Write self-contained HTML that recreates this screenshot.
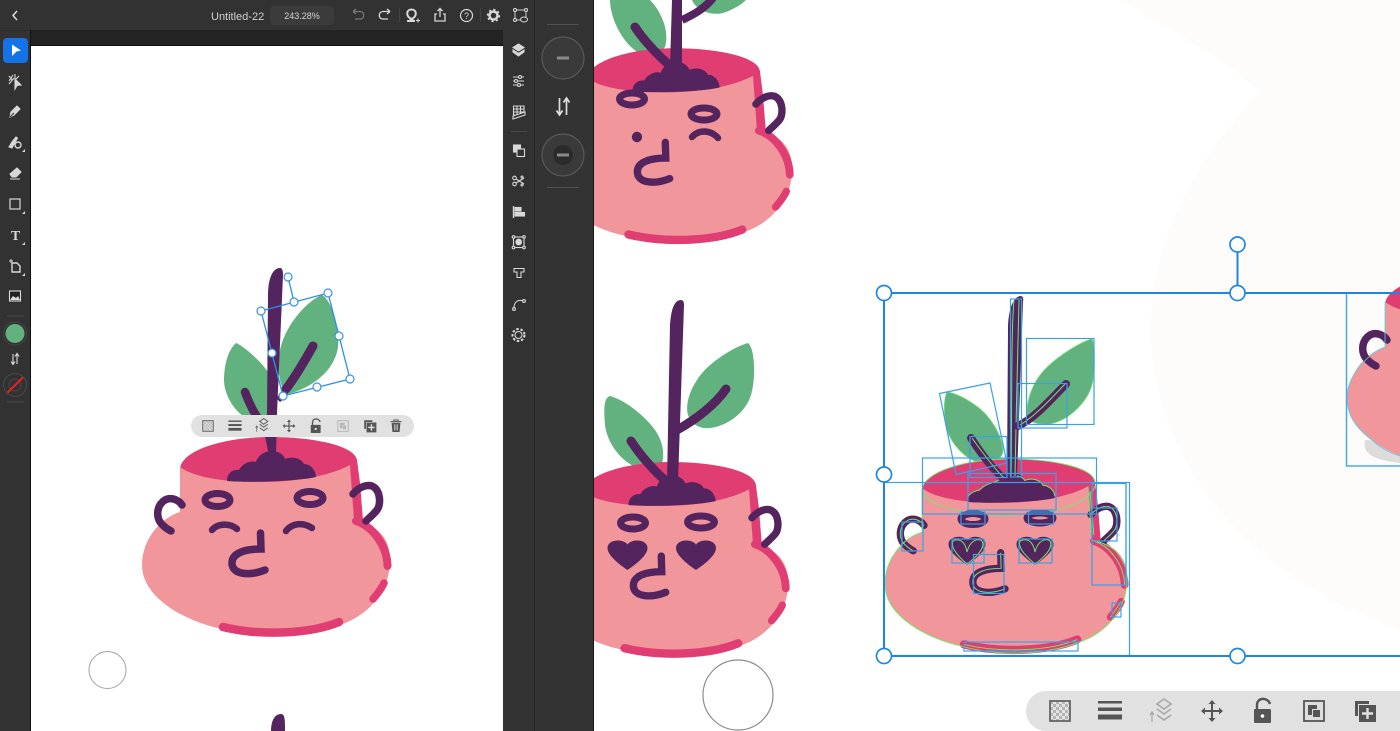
<!DOCTYPE html>
<html><head><meta charset="utf-8"><style>
html,body{margin:0;padding:0;background:#fff;width:1400px;height:731px;overflow:hidden}
svg{position:absolute;left:0;top:0;display:block}
text{font-family:"Liberation Sans",sans-serif}
</style></head><body>
<svg width="1400" height="731" viewBox="0 0 1400 731" xmlns="http://www.w3.org/2000/svg">
<defs>
<pattern id="chk" width="6" height="6" patternUnits="userSpaceOnUse" x="-10" y="-10"><rect width="6" height="6" fill="#e4e4e4"/><rect width="3" height="3" fill="#b4b4b4"/><rect x="3" y="3" width="3" height="3" fill="#b4b4b4"/></pattern>

<g id="pot">
  <path d="M180 470C180 450 225 437 270 437C315 437 355 446 357 460L360 483L363 520L350 524L300 500H200Z" fill="#e03e72"/>
  <path d="M180 467L180 512C160 518 142 540 142 565C142 600 190 622 218 628C250 638 300 640 340 625C370 615 390 590 390 560C390 535 375 525 354 520L350 465C330 476 295 482 262 482C225 482 195 478 180 467Z" fill="#f1979c"/>
  <path d="M356 521C372 526 387 545 387.500 566" fill="none" stroke="#e03e72" stroke-width="8" stroke-linecap="round"/>
  <path d="M223 627C260 636 310 634 339 622" fill="none" stroke="#e03e72" stroke-width="8.500" stroke-linecap="round"/>
  <path d="M384 583C381 590 377 594 373 599" fill="none" stroke="#e03e72" stroke-width="7.500" stroke-linecap="round"/>
  <path d="M353 494C358 488 366 484 372 486C381 490 381 505 377 510C373 515 369 518 366 521" fill="none" stroke="#54245f" stroke-width="7.500" stroke-linecap="round"/>
  <path d="M182 505C178 499 170 497 165 500C157 505 156 515 160 522C163 526 167 529 171 531" fill="none" stroke="#54245f" stroke-width="7.500" stroke-linecap="round"/>
  <path d="M227 481C227 474 232 469 239 470C242 464 250 460 256 462C258 455 265 451 272 451C279 451 284 455 285 459C292 456 301 458 304 464C311 464 316 471 316 477C300 481 250 483 227 481Z" fill="#54245f"/>
  <path d="M260.500 533L261 549C245 549 232 553 232 563C232 575 250 576 265 570" fill="none" stroke="#54245f" stroke-width="7.500" stroke-linecap="round"/>
</g>

<g id="potlines">
  <path d="M180 467L180 512C160 518 142 540 142 565C142 600 190 622 218 628C250 638 300 640 340 625C370 615 390 590 390 560C390 535 375 525 354 520L350 465"/>
  <path d="M180 468C182 450 225 437 270 437C315 437 355 446 357 460"/>
  <path d="M180 470C190 490 240 495 270 494C310 494 350 485 357 465"/>
  <path d="M356 521C372 526 387 545 387.500 566M352 470L356 515"/>
  <path d="M223 627C260 636 310 634 339 622"/>
  <path d="M353 494C358 488 366 484 372 486C381 490 381 505 377 510C373 515 369 518 366 521"/>
  <path d="M182 505C178 499 170 497 165 500C157 505 156 515 160 522C163 526 167 529 171 531"/>
  <path d="M260.500 533L261 549C245 549 232 553 232 563C232 575 250 576 265 570"/>
  <path d="M227 475C232 469 239 470 242 466C250 460 256 462 262 456C272 451 284 455 285 459C292 456 301 458 304 464C311 464 316 471 316 475"/>
  <path d="M384 583L373 599"/>
</g>

<path id="heart" d="M0 27C-6 23 -20 13 -20 5C-20 -3 -8 -4 -3 -1C-1 0 0 1 0 2C0 1 1 0 3 -1C8 -4 20 -3 20 5C20 13 6 23 0 27Z"/>

<g id="i-chk"><rect x="-10" y="-10" width="20" height="20" fill="url(#chk)" stroke="#666" stroke-width="1.800"/></g>
<g id="i-lines" fill="#555"><rect x="-12" y="-10" width="24" height="2.500"/><rect x="-12" y="-3.500" width="24" height="3.500"/><rect x="-12" y="3.500" width="24" height="5"/></g>
<g id="i-layer" fill="none" stroke="#555" stroke-width="1.600"><path d="M3 -13L10 -8L3 -3L-4 -8Z"/><path d="M-4 -3L3 2L10 -3"/><path d="M-4 3L3 8L10 3"/><path d="M-9 10V1M-11 3L-9 0L-7 3" stroke-width="1.200"/></g>
<g id="i-move" fill="#555"><rect x="-10" y="-1" width="20" height="2"/><rect x="-1" y="-10" width="2" height="20"/><path d="M-11 0L-7 -3.500V3.500ZM11 0L7 -3.500V3.500ZM0 -11L-3.500 -7H3.500ZM0 11L-3.500 7H3.500Z"/></g>
<g id="i-lock"><path d="M-6 -2V-6C-6 -14 5 -14 7 -7" fill="none" stroke="#555" stroke-width="2.400"/><rect x="-9" y="-2" width="17" height="14" rx="1" fill="#555"/><circle cx="-0.500" cy="5" r="1.800" fill="#fff"/></g>
<g id="i-mask"><rect x="-10" y="-10" width="20" height="20" fill="#dedede" stroke="#555" stroke-width="1.800"/><path d="M-6 -6H3V-2H-2V4H-6Z" fill="#555"/><rect x="-1" y="-1" width="7" height="7" fill="#555"/></g>
<g id="i-dup"><path d="M-10 -10H4V-7H-7V5H-10Z" fill="#555"/><rect x="-6" y="-6" width="17" height="17" fill="#555"/><path d="M2.500 -3V8M-3 2.500H8" stroke="#e1e1e1" stroke-width="2.400"/></g>
<g id="i-trash"><path d="M-10 -8H10M-4 -8V-11H4V-8" fill="none" stroke="#555" stroke-width="1.800"/><path d="M-8 -6H8L6.500 11H-6.500Z" fill="#555"/><path d="M-3 -3V8M0 -3V8M3 -3V8" stroke="#e1e1e1" stroke-width="1.200"/></g>
</defs>

<rect width="1400" height="731" fill="#fff"/>

<!-- off-white blob -->
<path d="M1120 0C1160 25 1220 55 1260 92C1185 170 1150 250 1151 335C1155 450 1230 570 1400 630V0Z" fill="#fdfcfa"/>

<!-- Pot C (top) -->
<path d="M610 0C610 20 625 48 643 55C650 57 662 52 665 47C670 30 660 10 650 0Z" fill="#62b27f"/>
<path d="M692 0C696 10 710 16 723 13C735 9 742 4 746 0Z" fill="#62b27f"/>
<g transform="translate(410 -380) scale(.98)"><use href="#pot"/></g>
<path d="M672 0L670 66H682L682 0Z" fill="#54245f"/>
<path d="M682 20C695 14 705 8 713 -2" fill="none" stroke="#54245f" stroke-width="8"/>
<path d="M635 27C645 42 658 55 668 64" fill="none" stroke="#54245f" stroke-width="9" stroke-linecap="round"/>
<ellipse cx="632" cy="99" rx="12.500" ry="6" fill="none" stroke="#54245f" stroke-width="7"/>
<ellipse cx="704" cy="114" rx="13" ry="6" fill="none" stroke="#54245f" stroke-width="7"/>
<path d="M692 137C698 130 710 129 718 138" fill="none" stroke="#54245f" stroke-width="6.500" stroke-linecap="round"/>
<circle cx="637" cy="137" r="5.200" fill="#54245f"/>

<!-- Pot B -->
<path d="M748 343C736 346 708 362 697 380C690 390 685 405 688 415C692 425 700 429 710 428C728 426 746 412 751 395C756 378 755 348 748 343Z" fill="#62b27f"/>
<path d="M610 396C603 398 604 412 605 425C607 442 620 462 640 469C650 472 660 470 662 463C665 452 662 440 655 430C645 416 625 400 610 396Z" fill="#62b27f"/>
<g transform="translate(406 33.700) scale(.98)"><use href="#pot"/></g>
<path d="M681 300C674 300 671 310 670 325L667 482H678L684 305C684 302 683 300 681 300Z" fill="#54245f"/>
<path d="M677 430C695 420 715 405 726 389" fill="none" stroke="#54245f" stroke-width="9" stroke-linecap="round"/>
<path d="M631 441C640 455 655 472 666 481" fill="none" stroke="#54245f" stroke-width="9" stroke-linecap="round"/>
<ellipse cx="633" cy="523" rx="12.500" ry="6" fill="none" stroke="#54245f" stroke-width="7"/>
<ellipse cx="701" cy="522" rx="13.500" ry="6" fill="none" stroke="#54245f" stroke-width="7"/>
<use href="#heart" fill="#54245f" transform="translate(627.500 543)"/>
<use href="#heart" fill="#54245f" transform="translate(696 543)"/>

<!-- Pot A -->
<path d="M322 295C332 300 340 330 338 347C334 375 305 390 288 394C280 390 276 370 280 350C285 325 308 300 322 295Z" fill="#62b27f"/>
<path d="M236 343C228 350 224 365 224 380C224 395 235 412 245 417L270 417L268 372C260 360 242 345 236 343Z" fill="#62b27f"/>
<use href="#pot"/>
<path d="M280 268C272 268 268 280 268 295L267 413L265 436L269 456H276L277 413L283 275C283 270 282 268 280 268Z" fill="#54245f"/>
<path d="M286 389C293 380 304 362 313 346" fill="none" stroke="#54245f" stroke-width="9" stroke-linecap="round"/>
<path d="M278 400L286 392" stroke="#54245f" stroke-width="6"/>
<path d="M245 392C248 400 252 410 258 418" fill="none" stroke="#54245f" stroke-width="8.500" stroke-linecap="round"/>
<ellipse cx="217.500" cy="500" rx="12.500" ry="6.500" fill="none" stroke="#54245f" stroke-width="7"/>
<ellipse cx="310" cy="498" rx="13" ry="6.500" fill="none" stroke="#54245f" stroke-width="7"/>
<path d="M212 530C218 523 230 523 237 529" fill="none" stroke="#54245f" stroke-width="6.500" stroke-linecap="round"/>
<path d="M286 531C292 523 303 522 312 528" fill="none" stroke="#54245f" stroke-width="6.500" stroke-linecap="round"/>
<!-- bottom stem -->
<path d="M271 731C271 722 274 714 281 714C285 714 285 720 285 731Z" fill="#54245f"/>
<!-- selection on A -->
<g stroke="#2b8fe8" fill="none" stroke-width="1.300">
<path d="M261 311L328 293L350 379L283 396Z"/><path d="M294 302L288 277"/>
</g>
<g fill="#fff" stroke="#3b92e8" stroke-width="1.200">
<circle cx="288" cy="277" r="4"/><circle cx="261" cy="311" r="4"/><circle cx="294" cy="302" r="4"/><circle cx="328" cy="293" r="4"/><circle cx="339" cy="336" r="4"/><circle cx="350" cy="379" r="4"/><circle cx="317" cy="387" r="4"/><circle cx="283" cy="396" r="4"/><circle cx="272" cy="353" r="4"/>
</g>
<!-- toolbar small -->
<rect x="191" y="415" width="223" height="22" rx="11" fill="#e1e1e1"/>
<g transform="translate(208 426) scale(.53)"><use href="#i-chk"/></g>
<g transform="translate(235 426) scale(.55)"><use href="#i-lines"/></g>
<g transform="translate(262 426) scale(.58)"><use href="#i-layer"/></g>
<g transform="translate(289 426) scale(.58)"><use href="#i-move"/></g>
<g transform="translate(316 426) scale(.58)"><use href="#i-lock"/></g>
<g transform="translate(343 426) scale(.53)" opacity=".3"><use href="#i-mask"/></g>
<g transform="translate(370 426) scale(.58)"><use href="#i-dup"/></g>
<g transform="translate(396 426) scale(.55)"><use href="#i-trash"/></g>
<circle cx="107.500" cy="670" r="18.500" fill="#fff" stroke="#a3a3a3" stroke-width="1"/>

<!-- Pot D -->
<path d="M1092 339C1080 342 1050 360 1038 378C1030 390 1026 405 1027 417C1030 423 1040 425 1050 424C1070 420 1090 400 1093 380C1095 365 1095 345 1092 339Z" fill="#62b27f" stroke="#74e070" stroke-width=".8"/>
<path d="M947 392C943 400 944 420 947 430C952 445 965 458 977 462C990 465 1003 460 1003 450C1002 435 990 415 975 405C965 398 955 393 947 392Z" fill="#62b27f" stroke="#74e070" stroke-width=".8"/>
<g transform="translate(746.400 32.500) scale(.976)"><use href="#pot"/><use href="#potlines" fill="none" stroke="#74e868" stroke-width="1"/></g>
<path d="M1020 296C1012 298 1008 312 1008 330L1007 478H1017L1023 302C1024 297 1022 296 1020 296Z" fill="#54245f"/>
<path d="M1014 300C1011 330 1012 420 1011 476" fill="none" stroke="#74e868" stroke-width="1"/>
<path d="M1019 300C1018 340 1016 420 1015 476" fill="none" stroke="#74e868" stroke-width="1"/>
<path d="M1018 426C1035 418 1050 400 1066 384" fill="none" stroke="#54245f" stroke-width="8" stroke-linecap="round"/>
<path d="M1020 425C1035 416 1050 400 1065 384" fill="none" stroke="#74e868" stroke-width="1"/>
<path d="M971 438C980 452 992 468 1003 478" fill="none" stroke="#54245f" stroke-width="8" stroke-linecap="round"/>
<path d="M972 438C982 452 994 468 1004 478" fill="none" stroke="#74e868" stroke-width="1"/>
<ellipse cx="973" cy="519" rx="12" ry="5.500" fill="none" stroke="#54245f" stroke-width="7"/>
<ellipse cx="1040" cy="518" rx="13" ry="5" fill="none" stroke="#54245f" stroke-width="7"/>
<use href="#heart" fill="#54245f" stroke="#54245f" stroke-width="2" transform="translate(967 540) scale(.88)"/>
<use href="#heart" fill="#54245f" stroke="#54245f" stroke-width="2" transform="translate(1035 540) scale(.88)"/>
<path d="M953 541C958 538 965 540 967 552C970 540 978 538 982 541C986 548 975 558 967 564C960 558 950 548 953 541ZM1020 541C1026 538 1033 540 1035 552C1038 540 1046 538 1050 541C1054 548 1043 558 1035 564C1028 558 1017 548 1020 541Z" fill="none" stroke="#74e868" stroke-width="1"/>

<!-- Pot E -->
<path d="M1365 440C1362 455 1375 460 1400 463V442Z" fill="#dedcda"/>
<g transform="translate(1205 -165)"><use href="#pot"/></g>
<path d="M1385 302V347C1370 352 1347 375 1347 397C1347 420 1360 430 1372 440C1380 448 1390 453 1400 456" fill="none" stroke="#4fd8e8" stroke-width=".8"/>
<rect x="1346.500" y="293" width="80" height="173" fill="none" stroke="#4ea6ea" stroke-width="1.500"/>

<!-- bounding boxes D -->
<g fill="none" stroke="#3ba0ea" stroke-width="1.200">
<rect x="1010.500" y="299" width="11" height="178"/>
<rect x="1026.500" y="338.500" width="67.500" height="86"/>
<rect x="1018" y="383.500" width="49" height="44.500"/>
<path d="M939.500 393.500L990 383L1007 463L956 474.500Z"/>
<rect x="970" y="436.500" width="37" height="41"/>
<rect x="922.500" y="458" width="174" height="56"/>
<rect x="968" y="473.500" width="88" height="36.500"/>
<rect x="884" y="482.500" width="245.500" height="173"/>
<path d="M1126 483V585"/>
<rect x="1092" y="483.500" width="34" height="101.500"/>
<rect x="1092" y="508" width="25" height="33"/>
<rect x="902" y="522" width="21" height="29"/>
<rect x="961" y="512" width="24" height="12"/>
<rect x="1028.500" y="512" width="25" height="12"/>
<rect x="952" y="539" width="32" height="24"/>
<rect x="1019" y="539" width="33" height="24"/>
<rect x="973.500" y="554.500" width="30.500" height="39"/>
<rect x="1112" y="603" width="9" height="14"/>
<rect x="964" y="642" width="114" height="9"/>
</g>
<g fill="none" stroke="#1c86e2" stroke-width="2">
<path d="M884 293H1400M884 293V656H1400"/>
<path d="M1237.500 244V293"/>
</g>
<g fill="#fff" stroke="#1c86e2" stroke-width="1.700">
<circle cx="884" cy="293" r="7.500"/><circle cx="1237.500" cy="293" r="7.500"/><circle cx="1237.500" cy="244.500" r="7.500"/><circle cx="884" cy="474.500" r="7.500"/><circle cx="884" cy="656" r="7.500"/><circle cx="1237.500" cy="656" r="7.500"/>
</g>
<circle cx="738" cy="695" r="35" fill="#fff" stroke="#8c8c8c" stroke-width="1.200"/>

<!-- big toolbar -->
<path d="M1400 691H1046A20 20 0 0 0 1046 731H1400Z" fill="#e1e1e1"/>
<g transform="translate(1060 711)"><use href="#i-chk"/></g>
<g transform="translate(1110 711)"><use href="#i-lines"/></g>
<g transform="translate(1161 712)" opacity=".4"><use href="#i-layer"/></g>
<g transform="translate(1212 711)"><use href="#i-move"/></g>
<g transform="translate(1263 711)"><use href="#i-lock"/></g>
<g transform="translate(1314 711)"><use href="#i-mask"/></g>
<g transform="translate(1365 711)"><use href="#i-dup"/></g>

<!-- panels -->
<rect x="0" y="0" width="31" height="731" fill="#323232"/>
<rect x="30" y="30" width="1" height="701" fill="#111"/>
<rect x="503" y="0" width="31" height="731" fill="#323232"/>
<rect x="534" y="0" width="59" height="731" fill="#333"/>
<rect x="534" y="0" width="1" height="731" fill="#272727"/>
<rect x="593" y="0" width="1" height="731" fill="#161616"/>
<rect x="0" y="0" width="534" height="30" fill="#323232"/>
<rect x="31" y="30" width="472" height="16" fill="#232323"/>
<rect x="31" y="45" width="472" height="1" fill="#0c0c0c"/>
<rect x="0" y="30" width="30" height="1" fill="#2b2b2b"/>

<!-- top bar -->
<path d="M17 11L13 15.500L17 20" fill="none" stroke="#ddd" stroke-width="1.500"/>
<text x="211" y="20" font-size="11" fill="#d2d2d2">Untitled-22</text>
<rect x="270" y="6" width="64" height="19" rx="4" fill="#3b3b3b"/>
<text x="302" y="19" font-size="9" fill="#d4d4d4" text-anchor="middle">243.28%</text>
<path d="M353 11.500H360C365 11.500 365 19 360 19H355M353 11.500L356 9M353 11.500L356 14" fill="none" stroke="#777" stroke-width="1.300"/>
<path d="M390 11.500H383C378 11.500 378 19 383 19H388M390 11.500L387 9M390 11.500L387 14" fill="none" stroke="#d8d8d8" stroke-width="1.300"/>
<rect x="399" y="8" width="1" height="14" fill="#444"/>
<path d="M407 21H410.500V18.500C406 16 406 9.500 411.500 9.500C417 9.500 417 16 412.500 18.500V21H415" fill="none" stroke="#d8d8d8" stroke-width="2"/>
<path d="M416 20.500H420M418 18.500V22.500" stroke="#d8d8d8" stroke-width="1.100"/>
<path d="M437 14H435V21H445V14H443M440 17V9M437.500 11L440 8.500L442.500 11" fill="none" stroke="#d8d8d8" stroke-width="1.300"/>
<circle cx="466.500" cy="15.500" r="6" fill="none" stroke="#d8d8d8" stroke-width="1.200"/>
<text x="466.500" y="19" font-size="9" fill="#d8d8d8" text-anchor="middle">?</text>
<rect x="480" y="8" width="1" height="14" fill="#444"/>
<circle cx="493.500" cy="15.500" r="4" fill="none" stroke="#d8d8d8" stroke-width="2.500"/>
<circle cx="493.500" cy="15.500" r="5.800" fill="none" stroke="#d8d8d8" stroke-width="1.800" stroke-dasharray="2 2.500"/>
<rect x="515" y="10" width="11" height="10" fill="none" stroke="#ccc" stroke-width="1"/>
<g fill="#333" stroke="#ddd" stroke-width="1"><circle cx="515" cy="10" r="1.500"/><circle cx="526" cy="10" r="1.500"/><circle cx="515" cy="20" r="1.500"/></g>
<ellipse cx="524" cy="19.500" rx="3.500" ry="2.500" fill="#333" stroke="#ddd" stroke-width="1"/>

<!-- left tools -->
<rect x="3" y="38" width="25" height="25" rx="4" fill="#1473e6"/>
<path d="M12 44.500L21 50.500L16.500 51.500L12 56Z" fill="#fff"/>
<g stroke="#d8d8d8" fill="none" stroke-width="1.100">
<path d="M9 81L13 75M12 80L9 76M15 74V79M19 76L16 79M9 84L14 78"/>
<path d="M15 79L21 85L17 85.500L15 89Z" fill="#d8d8d8"/>
<path d="M10 117L11 112L17 106L20 109L14 115Z" fill="#d8d8d8"/>
<path d="M10 117L14 113"  stroke="#333"/>
<path d="M9 147L12 142L16 137L17.500 138L14 144L12 148Z" fill="#d8d8d8"/>
<circle cx="18" cy="145" r="3" stroke-width="1.400"/>
<path d="M10 174L17 168L21 172L16 177H12Z" fill="#d8d8d8"/>
<path d="M10 179H20" stroke-width="1"/>
<rect x="10" y="199" width="10" height="10" stroke-width="1.200"/>
<path d="M12 263H17L20 266V272H12Z" stroke-width="1.400"/><path d="M9 261H13M11 259V263" stroke-width="1"/>
<rect x="9.500" y="291" width="11" height="10" fill="#222" stroke="#ddd"/>
<path d="M10 300L13 296L16 298L18 296L20 300Z" fill="#ddd" stroke="none"/>
</g>
<text x="15.500" y="240" font-size="14" font-weight="bold" fill="#d8d8d8" text-anchor="middle" style="font-family:'Liberation Serif',serif">T</text>
<g fill="#d8d8d8"><path d="M25 149V152H22Z"/><path d="M25 211V214H22Z"/><path d="M25 242V245H22Z"/><path d="M25 273V276H22Z"/></g>
<rect x="7" y="315.500" width="17" height="1" fill="#4a4a4a"/>
<circle cx="15" cy="333.500" r="11.500" fill="none" stroke="#454545" stroke-width="1"/>
<circle cx="15" cy="333.500" r="9.500" fill="#62b27f"/>
<path d="M13 354V364M11 361.500L13 364.500L15 361.500M17 364V354M15 356.500L17 353.500L19 356.500" fill="none" stroke="#ddd" stroke-width="1.100"/>
<circle cx="15" cy="385" r="11.500" fill="none" stroke="#4a4a4a"/><circle cx="15" cy="385" r="6" fill="none" stroke="#4a4a4a"/>
<path d="M7.500 392.500L23 377.500" stroke="#f01f1f" stroke-width="2"/>
<rect x="7" y="401.500" width="17" height="1" fill="#4a4a4a"/>

<!-- right col tools -->
<g fill="none" stroke="#d8d8d8" stroke-width="1.100">
<path d="M518.500 44L524 47.500L518.500 51L513 47.500Z" fill="#d8d8d8"/>
<path d="M513 50L518.500 53.500L524 50L524 52L518.500 56L513 52Z" fill="#d8d8d8"/>
<path d="M513 77H524M513 81H524M513 85H524"/><circle cx="520" cy="77" r="1.500" fill="#333"/><circle cx="516" cy="81" r="1.500" fill="#333"/><circle cx="519" cy="85" r="1.500" fill="#333"/>
<path d="M513.500 106H524V115H513.500ZM513.500 109H524M513.500 112H524M517 106V115M520.500 106V115"/>
<path d="M513 116L525 112V115L513 119Z" fill="#333"/>
<rect x="513.500" y="145" width="7" height="7" fill="#d8d8d8"/><rect x="517" y="149" width="7.500" height="7.500" fill="#333"/>
<path d="M513 177L524 184M513 185L524 178"/><circle cx="514.500" cy="178" r="1.800" fill="#333"/><circle cx="514.500" cy="184" r="1.800" fill="#333"/><circle cx="522" cy="177" r="1"/><circle cx="522" cy="185" r="1"/>
<path d="M513.500 206V218" stroke-width="1.400"/>
<rect x="515" y="207.500" width="6" height="3.500" fill="#d8d8d8"/><rect x="515" y="212.500" width="9.500" height="3.500" fill="#d8d8d8"/>
<rect x="513.500" y="237" width="10.500" height="10.500"/><circle cx="518.700" cy="242" r="2.800" fill="#d8d8d8"/>
<g fill="#333"><circle cx="513.500" cy="237" r="1.300"/><circle cx="524" cy="237" r="1.300"/><circle cx="513.500" cy="247.500" r="1.300"/><circle cx="524" cy="247.500" r="1.300"/></g>
<path d="M514 268.500H524V272H521V277.500H517V272H514Z"/>
<path d="M514 308C514 302 518 299 523 301"/><circle cx="514" cy="309" r="1.400" fill="#333"/><circle cx="524" cy="301" r="1.400" fill="#333"/>
<circle cx="518.500" cy="335" r="3.500"/><circle cx="518.500" cy="335" r="6" stroke-dasharray="2.500 1.800" stroke-width="2"/>
</g>
<rect x="511" y="131" width="16" height="1" fill="#4a4a4a"/>

<!-- panel 2 -->
<rect x="547" y="24" width="32" height="1" fill="#505050"/>
<circle cx="563" cy="58" r="21" fill="#3a3a3a" stroke="#585858" stroke-width="1.200"/>
<rect x="557" y="56.500" width="12" height="3" fill="#8a8a8a"/>
<path d="M559.500 98V114M556.500 110.500L559.500 115L562.500 110.500M566.500 115V99M563.500 102.500L566.500 98L569.500 102.500" fill="none" stroke="#ddd" stroke-width="1.700"/>
<circle cx="563" cy="155" r="21" fill="#3a3a3a" stroke="#585858" stroke-width="1.200"/>
<circle cx="563" cy="155" r="10" fill="#2b2b2b"/>
<rect x="557" y="153.500" width="12" height="3" fill="#8a8a8a"/>
<rect x="547" y="187" width="32" height="1" fill="#505050"/>
</svg>
</body></html>
